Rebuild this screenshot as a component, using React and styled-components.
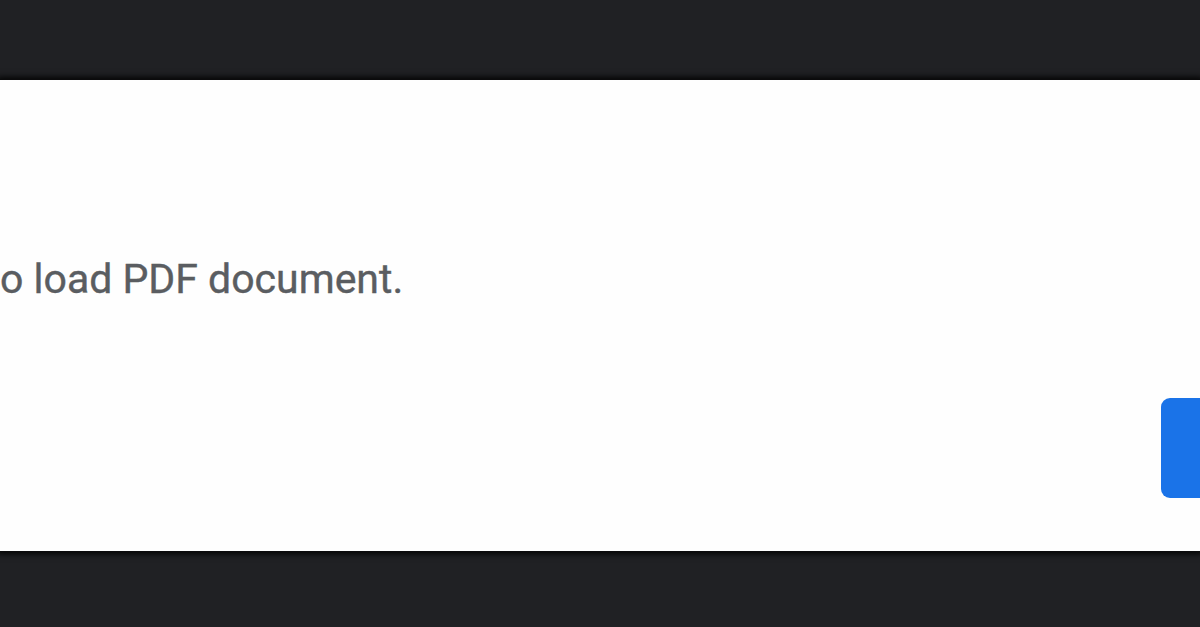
import styled, { createGlobalStyle } from "styled-components";

const GlobalStyle = createGlobalStyle`
  html, body {
    margin: 0;
    padding: 0;
    height: 100%;
    background: #202124;
    overflow: hidden;
  }
  #root {
    height: 100%;
  }
`;

const Page = styled.div`
  height: 627px;
  display: flex;
  flex-direction: column;
  padding-top: 80px;
  box-sizing: border-box;
  font-family: Roboto, "Liberation Sans", sans-serif;
`;

const Dialog = styled.div`
  height: 471px;
  background: #fefefe;
  box-shadow: 0 0 0 1px #0b0b0c, 0 0 6px 3px rgba(0, 0, 0, 0.9);
  display: flex;
  flex-direction: column;
  padding-top: 175px;
  box-sizing: border-box;
  overflow: hidden;
`;

const Message = styled.p`
  margin: 0;
  font-size: 41px;
  line-height: 48px;
  color: #5a5d61;
  white-space: nowrap;
  -webkit-text-stroke: 0.4px #5a5d61;
`;

const Actions = styled.div`
  display: flex;
  justify-content: flex-start;
  padding-left: 1161px;
  margin-top: 95px;
`;

const ReloadButton = styled.button`
  width: 200px;
  height: 100px;
  flex-shrink: 0;
  border: none;
  border-radius: 9px;
  background: #1a73e8;
  color: #fff;
  font-family: inherit;
  font-size: 36px;
`;

export default function App() {
  return (
    <>
      <GlobalStyle />
      <Page>
        <Dialog>
          <Message>o load PDF document.</Message>
          <Actions>
            <ReloadButton type="button" />
          </Actions>
        </Dialog>
      </Page>
    </>
  );
}
